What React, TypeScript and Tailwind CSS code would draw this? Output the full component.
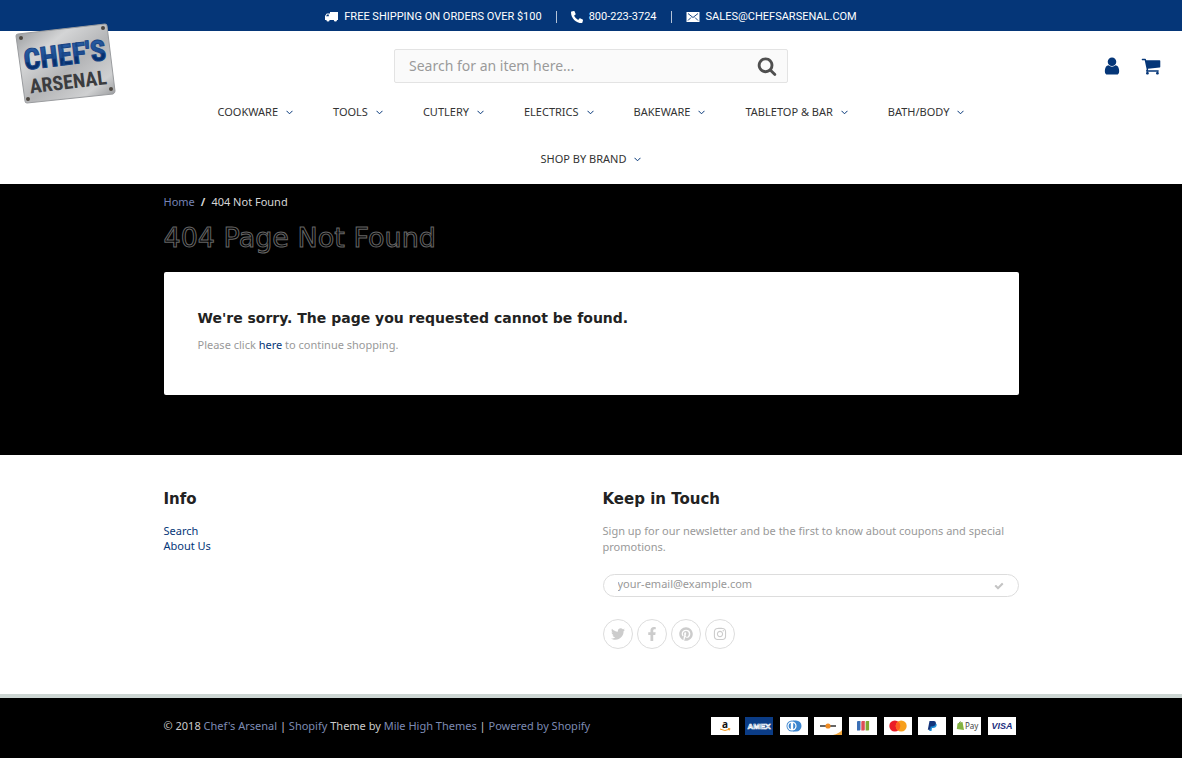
import { FaFacebookF, FaInstagram, FaPhoneAlt, FaPinterest, FaTwitter } from "react-icons/fa";

const menu = ["COOKWARE", "TOOLS", "CUTLERY", "ELECTRICS", "BAKEWARE", "TABLETOP & BAR", "BATH/BODY", "SHOP BY BRAND"];

const socials = [
  { id: 1, label: "Twitter", icon: <FaTwitter /> },
  { id: 2, label: "Facebook", icon: <FaFacebookF /> },
  { id: 3, label: "Pinterest", icon: <FaPinterest /> },
  { id: 4, label: "Instagram", icon: <FaInstagram /> },
];

const icons = {
  search:
    "M1216 832q0-185-131.5-316.5t-316.5-131.5-316.5 131.5-131.5 316.5 131.5 316.5 316.5 131.5 316.5-131.5 131.5-316.5zm512 832q0 52-38 90t-90 38q-54 0-90-38l-343-342q-179 124-399 124-143 0-273.5-55.5t-225-150-150-225-55.5-273.5 55.5-273.5 150-225 225-150 273.5-55.5 273.5 55.5 225 150 150 225 55.5 273.5q0 220-124 399l343 343q37 37 37 90z",
  cart:
    "M704 1536q0 52-38 90t-90 38-90-38-38-90 38-90 90-38 90 38 38 90zm896 0q0 52-38 90t-90 38-90-38-38-90 38-90 90-38 90 38 38 90zm128-1088v512q0 24-16.5 42.5t-40.5 21.5l-1044 122q13 60 13 70 0 16-24 64h920q26 0 45 19t19 45-19 45-45 19h-1024q-26 0-45-19t-19-45q0-11 8-31.5t16-36 21.5-40 15.5-29.5l-177-823h-204q-26 0-45-19t-19-45 19-45 45-19h256q16 0 28.5 6.5t19.5 15.5 13 24.5 8 26 5.5 29.5 4.5 26h1201q26 0 45 19t19 45z",
  user:
    "M1536 1399q0 109-62.5 187t-150.5 78h-854q-88 0-150.5-78t-62.5-187q0-85 8.5-160.5t31.5-152 58.5-131 94-89 134.5-34.5q131 128 313 128t313-128q76 0 134.5 34.5t94 89 58.5 131 31.5 152 8.5 160.5zm-256-887q0 159-112.5 271.5t-271.5 112.5-271.5-112.5-112.5-271.5 112.5-271.5 271.5-112.5 271.5 112.5 112.5 271.5z",
  check:
    "M1671 566q0 40-28 68l-724 724-136 136q-28 28-68 28t-68-28l-136-136-362-362q-28-28-28-68t28-68l136-136q28-28 68-28t68 28l294 295 656-657q28-28 68-28t68 28l136 136q28 28 28 68z",
};

function Icon({ d, className }: { d: string; className: string }) {
  return (
    <svg viewBox="0 0 1792 1792" fill="currentColor" className={className}>
      <path d={d} />
    </svg>
  );
}

function Logo() {
  return (
    <svg viewBox="0 0 104 84" className="h-[84px] w-[104px]" role="img" aria-label="Chef's Arsenal">
      <defs>
        <linearGradient id="steel" x1="0" y1="0" x2="1" y2="1">
          <stop offset="0" stopColor="#8f9194" />
          <stop offset="0.3" stopColor="#d4d5d6" />
          <stop offset="0.55" stopColor="#b4b5b7" />
          <stop offset="0.8" stopColor="#cfd0d1" />
          <stop offset="1" stopColor="#8a8c8f" />
        </linearGradient>
        <linearGradient id="ink" x1="0" y1="0" x2="0" y2="1">
          <stop offset="0" stopColor="#2d62a8" />
          <stop offset="0.55" stopColor="#1c4c92" />
          <stop offset="0.6" stopColor="#06306f" />
          <stop offset="1" stopColor="#06306f" />
        </linearGradient>
      </defs>
      <path d="M4 11 91 1q2 0 2 2l8 65q0 2-2 3L13 80q-2 0-2-2L2 13q0-2 2-2Z" fill="url(#steel)" stroke="#9a9c9f" strokeWidth="1" />
      <g fill="#4d4740">
        <circle cx="7" cy="15" r="2" />
        <circle cx="89" cy="5" r="2" />
        <circle cx="97" cy="66" r="2" />
        <circle cx="14" cy="76" r="2" />
      </g>
      <g transform="rotate(-7 52 42)" textAnchor="middle" fontWeight="700" fontFamily="'Roboto Condensed', 'Open Sans Condensed', Roboto, sans-serif">
        <text x="52" y="42" fontSize="29" fill="url(#ink)" stroke="#174585" strokeWidth="1">CHEF'S</text>
        <text x="52" y="66" fontSize="20" fill="#3b3c3f">ARSENAL</text>
      </g>
    </svg>
  );
}

function TopBar() {
  return (
    <div className="flex h-[31px] items-center justify-center bg-[#053678] pt-[3px] font-[Roboto,sans-serif] text-[11px] leading-3 text-white">
      <span className="flex items-center gap-1.5 pr-3.5">
        <svg viewBox="0 0 13 10" fill="currentColor" className="h-[10px] w-[13px]">
          <path fillRule="evenodd" d="M5 0h8v8h-1a1.6 1.6 0 0 1-3.200 0H4.600a1.600 1.600 0 0 1-3.200 0H0V4l1.800-2.500H5ZM2.200 2.500 1 4.300h2.800V2.500Z" />
        </svg>
        FREE SHIPPING ON ORDERS OVER $100
      </span>
      <span className="flex items-center gap-1.5 border-l border-white/70 px-3.5">
        <FaPhoneAlt className="size-3 shrink-0" />
        800-223-3724
      </span>
      <span className="flex items-center gap-1.5 border-l border-white/70 pl-3.5">
        <svg viewBox="0 0 13 10" className="h-[10px] w-[14px]">
          <path d="M0 0h13v10H0Z" fill="#fff" />
          <path d="m1.500 1.500 5 4 5-4M1.500 8.500l3-3M11.500 8.500l-3-3" fill="none" stroke="#053678" strokeWidth="0.900" />
        </svg>
        <a href="#">SALES@CHEFSARSENAL.COM</a>
      </span>
    </div>
  );
}

function Header() {
  return (
    <header className="relative bg-white">
      <div className="absolute -top-2 left-3.5">
        <a href="#"><Logo /></a>
      </div>
      <div className="grid grid-cols-3 items-center pt-[18px]">
        <form className="col-start-2 flex h-[34px] items-center rounded-xs border border-[#e3e3e3] bg-[#fafafa] pr-2.5 pl-3.5">
          <input type="text" aria-label="Search" placeholder="Search for an item here..." className="min-w-0 flex-1 bg-transparent text-[14px] leading-5 outline-none placeholder:text-[#9a9a9a]" />
          <button type="submit" aria-label="Search"><Icon d={icons.search} className="size-5 text-[#4f4f4f]" /></button>
        </form>
        <div className="flex justify-end gap-[19px] pr-[21px] text-[#053678]">
          <a href="#" aria-label="Account"><Icon d={icons.user} className="size-5" /></a>
          <a href="#" aria-label="Cart"><Icon d={icons.cart} className="size-5" /></a>
        </div>
      </div>
      <nav className="mx-auto flex max-w-[855px] flex-wrap justify-center pt-[6px] pb-px">
        {menu.map((el) => (
          <a key={el} href="#" className="flex h-[47px] items-center gap-2 px-5 text-[11px] text-[#333]">
            {el}
            <svg viewBox="0 0 7 5" className="h-[5px] w-[7px]">
              <path d="m.5.800 3 3 3-3" fill="none" stroke="#053678" strokeWidth="1" />
            </svg>
          </a>
        ))}
      </nav>
    </header>
  );
}

function NotFound() {
  return (
    <main className="bg-black pb-[60px]">
      <div className="mx-auto max-w-[855px]">
        <div className="flex gap-1.5 pt-3 text-[11px] leading-3 text-[#d5d5d5]">
          <a href="#" className="text-[#7583b5]">Home</a>
          <span className="font-bold">/</span>
          <span>404 Not Found</span>
        </div>
        <h1 className="pt-3.5 pb-[18px] font-['DejaVu_Sans',sans-serif] text-[27px] leading-8 text-black [-webkit-text-stroke:1px_#666]">404 Page Not Found</h1>
        <div className="rounded-xs bg-white px-[34px] pt-9 pb-[42px]">
          <h2 className="font-['DejaVu_Sans',sans-serif] text-[14px] leading-5 font-bold text-[#222]">We're sorry. The page you requested cannot be found.</h2>
          <p className="pt-[9px] text-[11px] leading-4 text-[#999]">
            Please click <a href="#" className="text-[#053678]">here</a> to continue shopping.
          </p>
        </div>
      </div>
    </main>
  );
}

function FooterColumns() {
  return (
    <div className="border-b-4 border-[#cdd6d3] bg-white pt-8 pb-[45px]">
      <div className="mx-auto grid max-w-[855px] grid-cols-[439px_1fr]">
        <div>
          <h3 className="font-['DejaVu_Sans',sans-serif] text-[15px] leading-6 font-bold text-[#222]">Info</h3>
          <ul className="pt-3 text-[11px] leading-[15px] text-[#053678]">
            <li><a href="#">Search</a></li>
            <li><a href="#">About Us</a></li>
          </ul>
        </div>
        <div>
          <h3 className="font-['DejaVu_Sans',sans-serif] text-[15px] leading-6 font-bold text-[#222]">Keep in Touch</h3>
          <p className="pt-3 text-[11px] leading-4 text-[#999]">
            Sign up for our newsletter and be the first to know about coupons and special promotions.
          </p>
          <form className="mt-[19px] flex h-[23px] items-center rounded-full border border-[#ddd] px-3.5">
            <input type="email" aria-label="Email" placeholder="your-email@example.com" className="min-w-0 flex-1 pb-[3px] text-[11px] leading-4 outline-none placeholder:text-[#999]" />
            <button type="submit" aria-label="Subscribe"><Icon d={icons.check} className="size-2.5 text-[#c4c4c4]" /></button>
          </form>
          <div className="flex gap-1 pt-[22px]">
            {socials.map((el) => (
              <a key={el.id} href="#" aria-label={el.label} className="flex size-[30px] items-center justify-center rounded-full border border-[#ddd] text-sm text-[#ccc]">{el.icon}</a>
            ))}
          </div>
        </div>
      </div>
    </div>
  );
}

const card = "h-[18px] w-7";

function Payments() {
  return (
    <div className="mr-[3px] flex w-[305px] justify-between">
      <svg viewBox="0 0 28 18" className={card} role="img" aria-label="Amazon">
        <path d="M0 0h28v18H0Z" fill="#fff" />
        <text x="14" y="11" textAnchor="middle" fontSize="10" fontWeight="700" fill="#111">a</text>
        <path d="M9 12q5 3 9.500.2M17 11.500l2 .2-.8 1.800" fill="none" stroke="#f29a1f" strokeWidth="1" />
      </svg>
      <svg viewBox="0 0 28 18" className={card} role="img" aria-label="American Express">
        <path d="M0 0h28v18H0Z" fill="#0b3c86" />
        <text x="14" y="12" textAnchor="middle" fontSize="8" fontWeight="700" fill="#0b3c86" stroke="#fff" strokeWidth="0.700" fontFamily="'Liberation Sans', sans-serif">AMEX</text>
      </svg>
      <svg viewBox="0 0 28 18" className={card} role="img" aria-label="Diners Club">
        <path d="M0 0h28v18H0Z" fill="#fff" />
        <path d="M13 3.500h3a5.500 5.500 0 0 1 0 11h-3Z" fill="#3d86cf" />
        <circle cx="12" cy="9" r="5.500" fill="#3d86cf" />
        <circle cx="12" cy="9" r="4.600" fill="#fff" />
        <path d="M10.800 5.800a3.400 3.400 0 0 0 0 6.400ZM13.200 5.800a3.400 3.400 0 0 1 0 6.400Z" fill="#3d86cf" />
      </svg>
      <svg viewBox="0 0 28 18" className={card} role="img" aria-label="Discover">
        <path d="M0 0h28v18H0Z" fill="#fff" />
        <path d="M28 13v5H19q6-1.500 9-5Z" fill="#f0a63c" />
        <path d="M6 9h16" stroke="#555" strokeWidth="1.800" />
        <circle cx="14" cy="9" r="2.600" fill="#ef8b22" />
      </svg>
      <svg viewBox="0 0 28 18" className={card} role="img" aria-label="JCB">
        <path d="M0 0h28v18H0Z" fill="#fff" />
        <path d="M8 5q0-1 1-1h2.500v8.500q0 1-1 1H8Z" fill="#3b6fb5" />
        <path d="M12.300 5q0-1 1-1h2.500v8.500q0 1-1 1h-2.500Z" fill="#dd4d55" />
        <path d="M16.600 5q0-1 1-1h2.500v8.500q0 1-1 1h-2.500Z" fill="#7fa832" />
      </svg>
      <svg viewBox="0 0 28 18" className={card} role="img" aria-label="Mastercard">
        <path d="M0 0h28v18H0Z" fill="#fff" />
        <circle cx="10.800" cy="9" r="5.500" fill="#eb1c26" />
        <circle cx="17.200" cy="9" r="5.500" fill="#f79f1b" />
        <path d="M14 4.500a5.500 5.500 0 0 1 0 9 5.500 5.500 0 0 1 0-9Z" fill="#fd6020" />
      </svg>
      <svg viewBox="0 0 28 18" className={card} role="img" aria-label="PayPal">
        <path d="M0 0h28v18H0Z" fill="#fff" />
        <path d="M13 6h4.500q1.800 1 1 3-.8 2-3.500 2h-1l-.5 3h-2.300Z" fill="#1f8fd6" />
        <path d="M11.500 4h4.300q2.500.3 2 2.800-.7 2.700-3.800 2.700h-1.300l-.6 3.200h-2.300Z" fill="#14357c" />
      </svg>
      <svg viewBox="0 0 28 18" className={card} role="img" aria-label="Shopify Pay">
        <path d="M0 0h28v18H0Z" fill="#fff" />
        <path d="m4.500 6.500 5-1.500 1.500 8-7.200-1Z" fill="#83b341" />
        <path d="M5.800 6.500Q7 3.500 8.300 5.500" fill="none" stroke="#5d8a2c" strokeWidth="0.800" />
        <text x="12" y="12" fontSize="8" fill="#444">Pay</text>
      </svg>
      <svg viewBox="0 0 28 18" className={card} role="img" aria-label="Visa">
        <path d="M0 0h28v18H0Z" fill="#fff" />
        <text x="14" y="12" textAnchor="middle" fontSize="9" fontWeight="700" fontStyle="italic" fill="#1c2f80" fontFamily="'Liberation Sans', sans-serif">VISA</text>
      </svg>
    </div>
  );
}

function App() {
  return (
    <div className="min-h-screen bg-black font-['Noto_Sans',sans-serif]">
      <TopBar />
      <Header />
      <NotFound />
      <footer>
        <FooterColumns />
        <div className="mx-auto flex h-[56px] max-w-[855px] items-center justify-between">
          <p className="text-[11px] text-[#ccc]">
            © 2018 <a href="#" className="text-[#7d8bb3]">Chef's Arsenal</a> | <a href="#" className="text-[#7d8bb3]">Shopify</a> Theme by{" "}
            <a href="#" className="text-[#7d8bb3]">Mile High Themes</a> | <a href="#" className="text-[#7d8bb3]">Powered by Shopify</a>
          </p>
          <Payments />
        </div>
      </footer>
    </div>
  );
}

export default App;
